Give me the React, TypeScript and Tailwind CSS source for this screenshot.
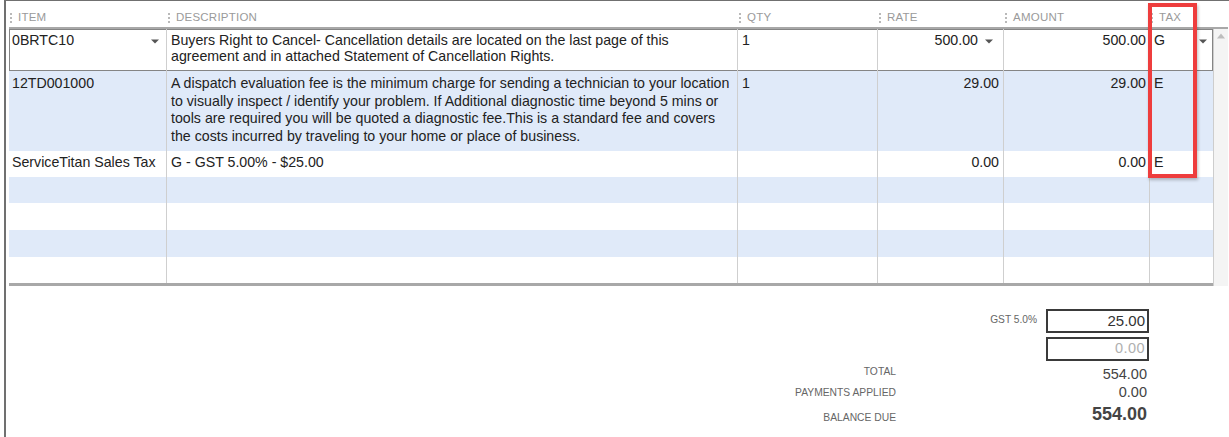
import React from "react"

type Row = {
  item?: string
  itemArrow?: boolean
  desc?: string[]
  qty?: string
  rate?: string
  rateArrow?: boolean
  amount?: string
  tax?: string
  taxArrow?: boolean
  h: string
  lh: string
  bg: string
  selected?: boolean
}

const rows: Row[] = [
  {
    item: "0BRTC10",
    itemArrow: true,
    desc: [
      "Buyers Right to Cancel- Cancellation details are located on the last page of this",
      "agreement and in attached Statement of Cancellation Rights.",
    ],
    qty: "1",
    rate: "500.00",
    rateArrow: true,
    amount: "500.00",
    tax: "G",
    taxArrow: true,
    h: "h-[42px]",
    lh: "leading-[15.5px]",
    bg: "bg-white",
    selected: true,
  },
  {
    item: "12TD001000",
    desc: [
      "A dispatch evaluation fee is the minimum charge for sending a technician to your location",
      "to visually inspect / identify your problem. If Additional diagnostic time beyond 5 mins or",
      "tools are required you will be quoted a diagnostic fee.This is a standard fee and covers",
      "the costs incurred by traveling to your home or place of business.",
    ],
    qty: "1",
    rate: "29.00",
    amount: "29.00",
    tax: "E",
    h: "h-[80px]",
    lh: "leading-[17.5px]",
    bg: "bg-[#e0eaf9]",
  },
  {
    item: "ServiceTitan Sales Tax",
    desc: ["G - GST 5.00% - $25.00"],
    rate: "0.00",
    amount: "0.00",
    tax: "E",
    h: "h-[26px]",
    lh: "leading-[15.5px]",
    bg: "bg-white",
  },
  { h: "h-[26px]", lh: "", bg: "bg-[#e0eaf9]" },
  { h: "h-[27px]", lh: "", bg: "bg-white" },
  { h: "h-[27px]", lh: "", bg: "bg-[#e0eaf9]" },
  { h: "h-[26px]", lh: "", bg: "bg-white" },
]

const cols = "grid grid-cols-[158px_571px_140px_126px_146px_63px]"

function Caret({ className = "" }: { className?: string }) {
  return (
    <svg width="8" height="5" viewBox="0 0 8 5" className={className}>
      <path d="M0 0.5 L8 0.5 L4 4.5 Z" fill="#555" />
    </svg>
  )
}

function HeadCell({ label }: { label: string }) {
  return (
    <div className="flex items-center gap-[6px] pl-[1px] pt-[7px]">
      <div className="h-[10px] w-0 border-l-2 border-dotted border-[#b9b9b9]" />
      <span className="text-[11.5px] tracking-[0.02em] text-[#9a9a9a]">{label}</span>
    </div>
  )
}

export default function App() {
  return (
    <div className="relative h-[437px] w-[1229px] overflow-hidden bg-white font-['Liberation_Sans',Arial,sans-serif]">
      <div className="ml-[4px] h-full border-l-2 border-t border-[#707070] pl-[3px]">
        {/* header */}
        <div className={`${cols} h-[28px] w-[1219px] border-b-2 border-[#a8a8a8]`}>
          <HeadCell label="ITEM" />
          <HeadCell label="DESCRIPTION" />
          <HeadCell label="QTY" />
          <HeadCell label="RATE" />
          <HeadCell label="AMOUNT" />
          <HeadCell label="TAX" />
        </div>

        {/* body */}
        <div className="flex">
          <div className="w-[1204px] border-b-[3px] border-[#a8a8a8]">
            {rows.map((r, i) => (
              <div
                key={i}
                className={`${cols} ${r.h} ${r.bg} ${r.lh} text-[14.2px] text-[#222] ${
                  r.selected ? "shadow-[inset_0_0_0_1px_#858585]" : ""
                }`}
              >
                <div className="flex items-start justify-between border-r border-[#cfcfcf] pl-[3px] pr-[7px] pt-[4px]">
                  <span className="whitespace-nowrap">{r.item}</span>
                  {r.itemArrow && <Caret className="mt-[6px]" />}
                </div>
                <div className="border-r border-[#cfcfcf] pl-[4px] pt-[4px] whitespace-nowrap">
                  {r.desc?.map((l, j) => <div key={j}>{l}</div>)}
                </div>
                <div className="border-r border-[#cfcfcf] pl-[4px] pt-[4px]">{r.qty}</div>
                <div
                  className={`flex items-start justify-end gap-[7px] border-r border-[#cfcfcf] pt-[4px] ${
                    r.rateArrow ? "pr-[10px]" : "pr-[4px]"
                  }`}
                >
                  <span>{r.rate}</span>
                  {r.rateArrow && <Caret className="mt-[6px]" />}
                </div>
                <div className="border-r border-[#cfcfcf] pr-[3px] pt-[4px] text-right">{r.amount}</div>
                <div className="flex items-start justify-between pl-[4px] pr-[6px] pt-[4px]">
                  <span>{r.tax}</span>
                  {r.taxArrow && <Caret className="mt-[6px]" />}
                </div>
              </div>
            ))}
          </div>
          {/* scrollbar */}
          <div className="w-[15px] border-l border-[#cdcdcd] bg-[#f4f4f4] pt-[4px]">
            <svg width="8" height="6" viewBox="0 0 8 6" className="ml-[3px]">
              <path d="M0 5.5 L8 5.5 L4 0.5 Z" fill="#bdbdbd" />
            </svg>
          </div>
        </div>

        {/* totals */}
        <div className="mt-[23px] flex flex-col items-end pr-[80px] text-[#444]">
          <div className="flex items-start gap-[9px]">
            <span className="mt-[3px] text-[10.2px] text-[#666]">GST 5.0%</span>
            <div className="flex h-[24px] w-[103px] items-center justify-end border-2 border-[#3a3a3a] pr-[2px] text-[15px] text-[#333]">
              25.00
            </div>
          </div>
          <div className="mt-[4px] flex h-[24px] w-[103px] items-center justify-end border-2 border-[#3a3a3a] pr-[2px] text-[14.5px] tracking-[0.03em] text-[#b0b0b0]">
            0.00
          </div>
          <div className="mt-[5px] flex h-[18px] w-[357px] items-center justify-between pr-[2px]">
            <span className="mb-[6px] w-[104px] text-right text-[10.3px] text-[#666]">TOTAL</span>
            <span className="text-[14.5px]">554.00</span>
          </div>
          <div className="flex h-[18px] w-[357px] items-center justify-between pr-[2px]">
            <span className="w-[104px] text-right text-[10.3px] text-[#666]">PAYMENTS APPLIED</span>
            <span className="text-[14.5px]">0.00</span>
          </div>
          <div className="flex h-[24px] w-[357px] items-center justify-between pr-[2px]">
            <span className="mt-[8px] w-[104px] text-right text-[10.3px] text-[#666]">BALANCE DUE</span>
            <span className="text-[18px] font-bold">554.00</span>
          </div>
        </div>
      </div>

      {/* highlight annotation */}
      <div className="absolute left-[1148px] top-[3px] h-[175px] w-[49px] border-4 border-[#ee3d3d] shadow-[1px_2px_3px_rgba(0,0,0,0.25)]" />
    </div>
  )
}
